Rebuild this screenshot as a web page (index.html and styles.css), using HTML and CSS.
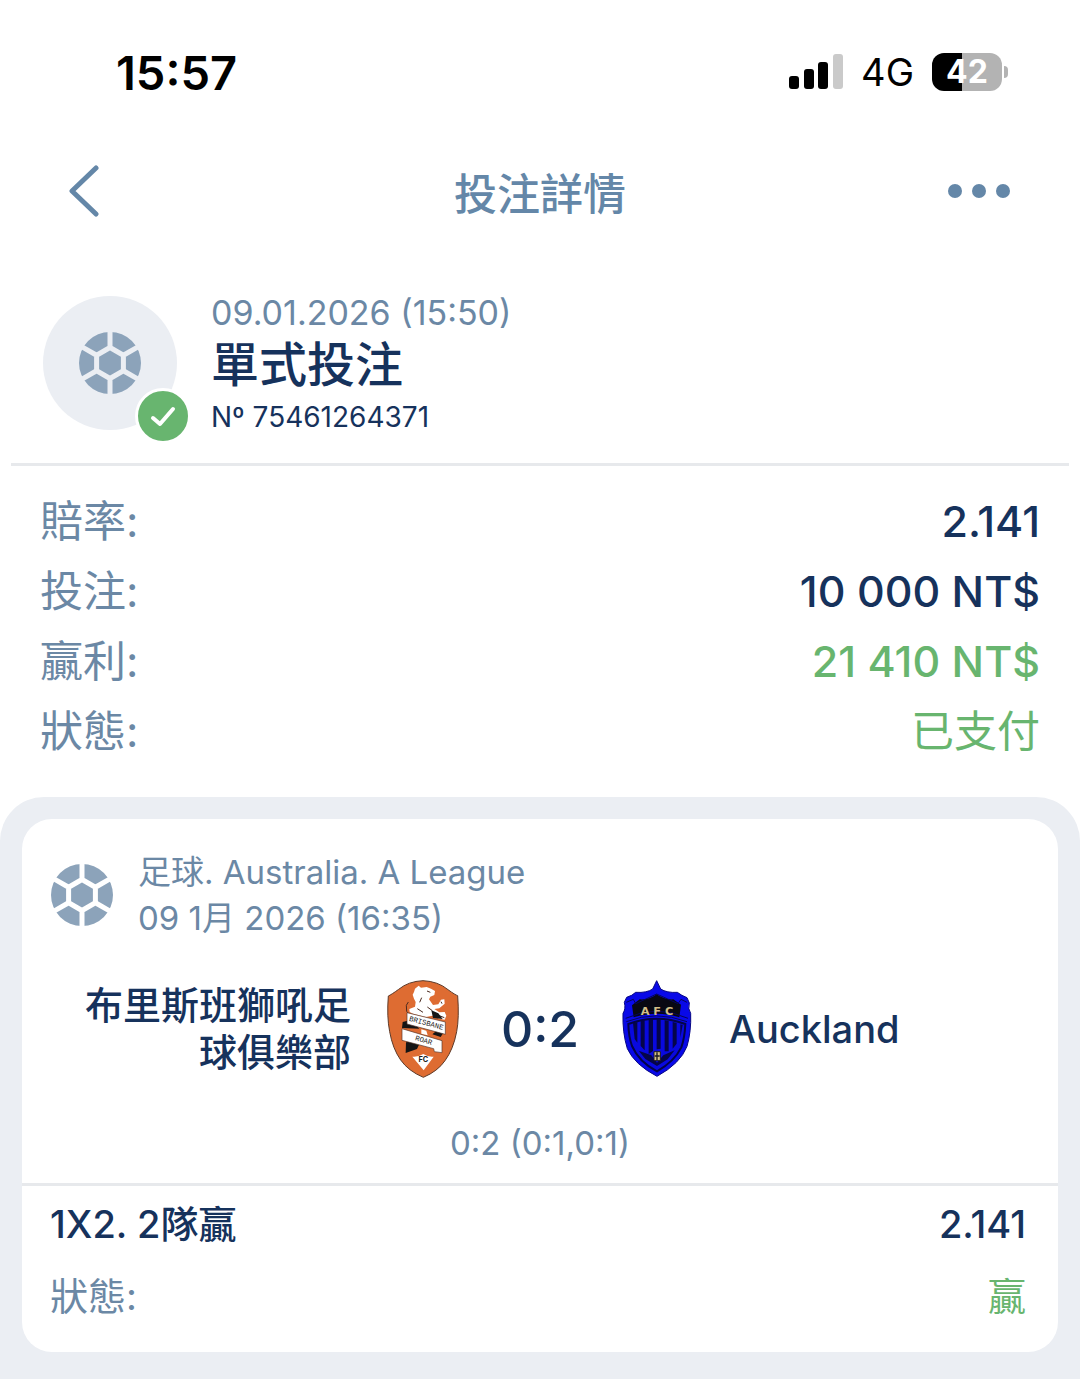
FILE: index.html
```html
<!DOCTYPE html>
<html lang="zh-Hant">
<head>
    <meta charset="UTF-8">
    <meta name="viewport" content="width=device-width, initial-scale=1.0">
    <title>投注詳情</title>
    <link rel="stylesheet" href="styles.css">
</head>
<body>
    <!-- ball icon, used twice -->
    <svg class="defs" width="0" height="0" aria-hidden="true">
        <mask id="seams">
            <rect x="-32" y="-32" width="64" height="64" fill="#fff"/>
            <path d="M0-15.500 13.400-7.750V7.750L0 15.500-13.400 7.750V-7.750ZM0-15V-32M0 15V32M13.400-7.750 28-16.200M13.400 7.750 28 16.200M-13.400-7.750-28-16.200M-13.400 7.750-28 16.200" fill="none" stroke="#000" stroke-width="5"/>
        </mask>
        <symbol id="ball" viewBox="-32 -32 64 64">
            <circle r="31" fill="#8ca3ba" mask="url(#seams)"/>
        </symbol>
    </svg>

    <div class="status-bar">
        <span class="clock">15:57</span>
        <div class="phone-info">
            <svg class="signal" viewBox="0 0 54 36">
                <rect x="0" y="22" width="10" height="13" rx="3"/>
                <rect x="15" y="15" width="10" height="20" rx="3"/>
                <rect x="29" y="8" width="10" height="27" rx="3"/>
                <rect x="44" y="0" width="10" height="35" rx="3" fill="#cacaca"/>
            </svg>
            <span class="network">4G</span>
            <div class="battery"><span class="level">42</span></div>
        </div>
    </div>

    <header class="nav">
        <button class="nav-button" aria-label="返回">
            <svg width="32" height="52" viewBox="0 0 32 52"><path d="M28 3 4 26 28 49" fill="none" stroke="#6487a8" stroke-width="5" stroke-linecap="round" stroke-linejoin="round"/></svg>
        </button>
        <h1>投注詳情</h1>
        <button class="nav-button" aria-label="更多">
            <svg width="62" height="16" viewBox="0 0 62 16" fill="#6487a8"><circle cx="7" cy="8" r="7"/><circle cx="31" cy="8" r="7"/><circle cx="55" cy="8" r="7"/></svg>
        </button>
    </header>

    <main>
        <section class="bet">
            <div class="bet-icon">
                <svg class="ball"><use href="#ball"/></svg>
                <span class="check">
                    <svg width="50" height="50" viewBox="0 0 50 50"><path d="M15 27 22 33 35 18" fill="none" stroke="#fff" stroke-width="4" stroke-linecap="round" stroke-linejoin="round"/></svg>
                </span>
            </div>
            <div class="bet-text">
                <p class="bet-date">09.01.2026 (15:50)</p>
                <h2>單式投注</h2>
                <p class="bet-number">Nº 75461264371</p>
            </div>
        </section>

        <dl class="summary">
            <div><dt>賠率:</dt><dd>2.141</dd></div>
            <div><dt>投注:</dt><dd>10 000 NT$</dd></div>
            <div><dt>贏利:</dt><dd class="green">21 410 NT$</dd></div>
            <div><dt>狀態:</dt><dd class="green state">已支付</dd></div>
        </dl>

        <section class="events">
            <article class="card">
                <div class="league">
                    <svg class="ball"><use href="#ball"/></svg>
                    <p>足球. Australia. A League<br>09 1月 2026 (16:35)</p>
                </div>

                <div class="match">
                    <span class="team home">布里斯班獅吼足球俱樂部</span>
                    <svg class="logo" viewBox="48 32 216 294">
                        <path d="M156 34Q201 36 231 61Q253 77 260 79Q265 145 257 187Q247 240 222 274Q200 306 157 324Q112 305 89 272Q65 238 56 187Q47 142 52 80Q61 76 83 60Q112 36 156 34Z" fill="#de6c32" stroke="#5d3a29" stroke-width="3"/>
                        <path d="M112 132 107 126 106 108 112 98" fill="none" stroke="#4b2b20" stroke-width="3"/>
                        <path d="M132 58 143 49 150 55 167 53 180 58 192 65 190 77 178 82 174 90 186 107 202 105 210 91 220 90 221 103 205 117 190 119 205 129 221 128 226 139 221 151 205 148 184 139 165 143 126 133 116 128 115 119 132 112 134 98 129 88 125 76 129 68Z" fill="#fff"/>
                        <path d="M168 65 178 69M152 85 146 99M169 113 184 124M139 118 156 129M205 139 220 145M210 97 213 103" fill="none" stroke="#4b2b20" stroke-width="3"/>
                        <path d="M181 123 202 132 215 149 186 146ZM95 158 121 151 145 178 93 176ZM105 219 151 212 138 239 104 251ZM203 179 223 181 209 203 184 195Z" fill="#151515"/>
                        <path d="M151 179 181 184 185 195 152 203Z" fill="#de6c32"/>
                        <path d="M108 130 223 158V195L108 164ZM93 178 213 214V250L190 247 188 238 93 213Z" fill="#fff" stroke="#543528" stroke-width="2"/>
                        <path d="M151 180 166 184 170 198 151 193Z" fill="#fff"/>
                        <path d="M124 262Q140 264 157 254Q172 264 188 262L158 303Z" fill="#fff"/>
                        <text class="banner" transform="translate(113 154) rotate(15)">BRISBANE</text>
                        <text class="banner" transform="translate(131 212) rotate(16)">ROAR</text>
                        <text class="fc" x="157" y="279" text-anchor="middle">FC</text>
                    </svg>
                    <strong class="score">0:2</strong>
                    <svg class="logo" viewBox="50 32 216 294">
                        <path d="M157 34 169 59Q187 71 219 69Q232 79 248 85L255 101Q250 119 259 132Q261 187 248 231Q228 283 158 321Q91 286 69 238Q54 190 56 132Q65 119 60 99L67 84Q84 79 94 69Q128 71 145 59Z" fill="#0909e8" stroke="#070784" stroke-width="3"/>
                        <path d="M106 90Q137 92 157 75Q180 92 207 90L230 106 225 144Q159 122 88 144L83 108Z" fill="#080812"/>
                        <path d="M66 99 87 90 94 103Q125 89 157 74Q190 89 221 103L230 90 248 99M64 147Q157 104 251 147M66 157Q155 122 248 157" fill="none" stroke="#05055b" stroke-width="3"/>
                        <path d="M72 164Q156 132 243 164Q241 206 231 234Q210 276 158 306Q104 278 83 230Q73 202 72 164Z" fill="#0909df" stroke="#040448" stroke-width="6"/>
                        <path d="M86 161 99 158V220L91 209ZM109 155 121 153V243L109 230ZM133 151 146 150V245L133 254ZM157 149 169 151V238L157 240ZM181 153 193 155V246L181 246ZM205 158 217 161V223L205 238ZM228 165 235 167 228 205Z" fill="#050549"/>
                        <path d="M103 244 141 258 158 280 177 258 211 243 190 270 158 290 123 269Z" fill="#050549"/>
                        <path d="M149 247H168V274H149Z" fill="#d3bf88" stroke="#1c1820" stroke-width="3"/>
                        <path d="M158 249V272M151 260H166" stroke="#1c1820" stroke-width="4"/>
                        <text class="afc" x="158" y="136" text-anchor="middle">A F C</text>
                    </svg>
                    <span class="team">Auckland</span>
                </div>

                <p class="periods">0:2 (0:1,0:1)</p>

                <dl class="outcome">
                    <div class="pick"><dt>1X2. 2隊贏</dt><dd>2.141</dd></div>
                    <div><dt>狀態:</dt><dd class="green state">贏</dd></div>
                </dl>
            </article>
        </section>
    </main>
</body>
</html>
```

FILE: styles.css
```css
* {
    box-sizing: border-box;
}
body {
    margin: 0;
    background-color: #fff;
    color: #16325c;
    font-family: Inter, "Noto Sans CJK TC", sans-serif;
}
h1, h2, p, dl, dd {
    margin: 0;
}
.defs {
    position: absolute;
}

/* status bar */
.status-bar {
    display: flex;
    justify-content: space-between;
    align-items: center;
    height: 144px;
    padding: 0 78px 0 116px;
    color: #000;
}
.clock {
    font-size: 47px;
    font-weight: 600;
}
.phone-info {
    display: flex;
    align-items: center;
    gap: 18px;
}
.signal {
    width: 54px;
    height: 36px;
}
.network {
    font-size: 38px;
}
.battery {
    position: relative;
    width: 70px;
    height: 38px;
    border-radius: 12px;
    background: linear-gradient(to right, #000 43%, #b3b3b3 43%);
    color: #fff;
    font-size: 32px;
    font-weight: 700;
    line-height: 38px;
    text-align: center;
}
.battery::after {
    content: "";
    position: absolute;
    left: 72px;
    top: 13px;
    width: 4px;
    height: 12px;
    border-radius: 0 6px 6px 0;
    background-color: #b3b3b3;
}

/* title bar */
.nav {
    display: flex;
    justify-content: space-between;
    align-items: center;
    height: 94px;
    padding: 0 68px;
}
.nav h1 {
    color: #6487a8;
    font-size: 43px;
    font-weight: 500;
}
.nav-button {
    display: flex;
    align-items: center;
    width: 64px;
    height: 64px;
    padding: 0;
    border: 0;
    background: none;
    cursor: pointer;
}

/* bet header */
.bet {
    display: flex;
    align-items: center;
    gap: 34px;
    margin: 0 11px;
    padding: 51px 32px 26px;
    border-bottom: 3px solid #e7e9ec;
}
.bet-icon {
    position: relative;
    display: flex;
    align-items: center;
    justify-content: center;
    width: 134px;
    height: 134px;
    border-radius: 50%;
    background-color: #ebeef3;
}
.ball {
    flex: none;
    width: 64px;
    height: 64px;
}
.check {
    position: absolute;
    right: -14px;
    bottom: -14px;
    width: 56px;
    height: 56px;
    border: 3px solid #fff;
    border-radius: 50%;
    background-color: #68b56f;
}
.bet-text {
    padding-top: 4px;
}
.bet-date {
    color: #6b88a5;
    font-size: 34px;
    line-height: 40px;
}
.bet h2 {
    font-size: 48px;
    font-weight: 500;
    line-height: 64px;
}
.bet-number {
    font-size: 28px;
    line-height: 40px;
}

/* summary */
.summary {
    padding: 20px 40px 31px;
}
.summary div {
    display: flex;
    justify-content: space-between;
    font-size: 43px;
    line-height: 70px;
}
dt {
    color: #6b88a5;
}
dd {
    font-weight: 500;
}
.green {
    color: #68b56f;
}
.state {
    font-weight: 400;
}

/* event card */
.events {
    padding: 22px 22px 27px;
    border-radius: 44px 44px 0 0;
    background-color: #ebeef3;
}
.card {
    border-radius: 30px;
    background-color: #fff;
}
.league {
    display: flex;
    align-items: center;
    gap: 24px;
    padding: 30px 28px 0;
    color: #6b88a5;
    font-size: 33px;
    line-height: 46px;
}
.match {
    display: grid;
    grid-template-columns: 1fr 72px 90px 72px 1fr;
    align-items: center;
    gap: 36px;
    padding: 39px 28px 0;
}
.team {
    font-size: 38px;
    font-weight: 500;
    line-height: 47px;
}
.home {
    text-align: right;
}
.logo {
    width: 72px;
    height: 98px;
}
.banner {
    font: 400 22px "Liberation Mono", monospace;
    fill: #252525;
}
.fc {
    font: 700 22px Inter, sans-serif;
    fill: #202020;
}
.afc {
    font: 700 34px "DejaVu Sans", sans-serif;
    fill: #d3bf88;
}
.score {
    font-size: 50px;
    font-weight: 500;
    text-align: center;
}
.periods {
    padding: 44px 0 19px;
    font-size: 33px;
    line-height: 42px;
    color: #6b88a5;
    text-align: center;
}
.outcome {
    padding: 2px 32px 20px 28px;
    border-top: 3px solid #e7e9ec;
}
.outcome div {
    display: flex;
    justify-content: space-between;
    font-size: 38px;
    line-height: 72px;
}
.outcome .pick dt {
    color: #16325c;
    font-weight: 500;
}
```
